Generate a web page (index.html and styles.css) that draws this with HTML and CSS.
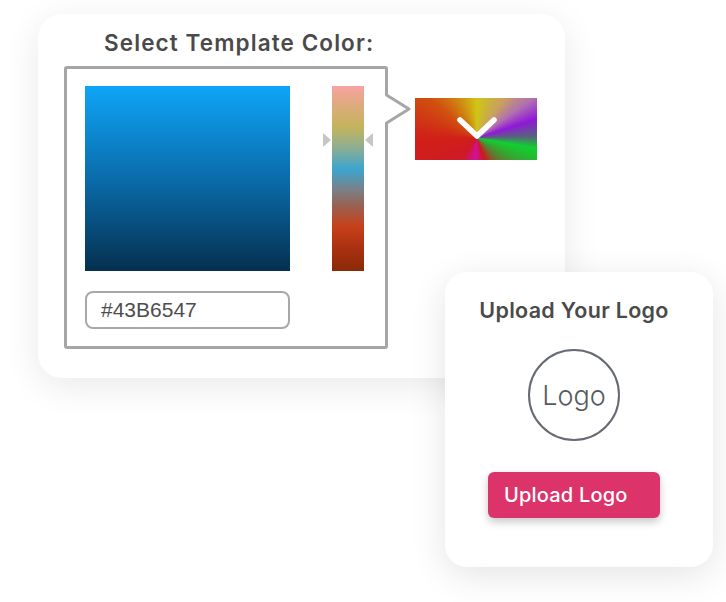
FILE: index.html
```html
<!DOCTYPE html>
<html lang="en">
<head>
	<meta charset="UTF-8">
	<title>Template setup</title>
	<link rel="stylesheet" href="styles.css">
</head>
<body>
	<div class="stage">
		<section class="color-card">
			<h2 class="color-title">Select Template Color:</h2>
			<div class="picker-row">
				<div class="picker">
					<div class="picker-main">
						<div class="sv-box"></div>
						<span class="hue-mark hue-mark-left"></span>
						<div class="hue"></div>
						<span class="hue-mark hue-mark-right"></span>
					</div>
					<div class="hex-input">#43B6547</div>
					<svg class="picker-tail" width="30" height="36" viewBox="0 0 30 36">
						<rect x="0" y="3" width="4" height="30" fill="#fff"/>
						<polyline points="1.5,0 1.5,4 24,18 1.5,32 1.5,36" fill="none" stroke="#a6a6a6" stroke-width="3" stroke-linejoin="round"/>
					</svg>
				</div>
				<div class="swatch">
					<svg width="122" height="62" viewBox="0 0 122 62">
						<polyline points="45,22 62,38 79,22" fill="none" stroke="#fff" stroke-width="5.5" stroke-linecap="round" stroke-linejoin="round"/>
					</svg>
				</div>
			</div>
		</section>

		<section class="logo-card">
			<h2 class="logo-title">Upload Your Logo</h2>
			<div class="logo-circle">Logo</div>
			<button class="upload-btn">Upload Logo</button>
		</section>
	</div>
</body>
</html>
```

FILE: styles.css
```css
*{
	margin: 0;
	padding: 0;
	box-sizing: border-box;
}
body{
	background: #fff;
	font-family: "Inter", "Open Sans", sans-serif;
}
.stage{
	position: relative;
	width: 726px;
	height: 602px;
	overflow: hidden;
	padding: 14px 0 0 38px;
}

/* colour picker card */
.color-card{
	width: 527px;
	height: 364px;
	background: #fff;
	border-radius: 24px;
	box-shadow: 0 8px 36px rgba(0,0,0,0.09);
	padding: 13px 0 0 26px;
}
.color-title{
	margin-left: 40px;
	height: 39px;
	font-size: 22.5px;
	line-height: 32px;
	font-weight: 600;
	letter-spacing: 1.1px;
	color: #4a4a4a;
}
.picker-row{
	display: flex;
	align-items: flex-start;
}
.picker{
	position: relative;
	width: 324px;
	height: 283px;
	border: 3px solid #a6a6a6;
	border-radius: 3px;
	padding: 17px 0 0 18px;
}
.picker-main{
	display: flex;
	align-items: flex-start;
}
.sv-box{
	width: 205px;
	height: 185px;
	background: linear-gradient(#0ea5f7, #0a6cab 50%, #05304f);
}
.hue{
	width: 32px;
	height: 185px;
	margin: 0 1px;
	background: linear-gradient(#f8a2a2 0%, #e0aa80 9%, #c4b45c 22%, #8fae90 33%, #3ca5cf 45%, #7a8088 56%, #9a6050 65%, #c8401a 76%, #a83010 88%, #8a2a08 100%);
}
.hue-mark{
	width: 0;
	height: 0;
	margin-top: 47px;
	border-top: 7px solid transparent;
	border-bottom: 7px solid transparent;
}
.hue-mark-left{
	margin-left: 33px;
	border-left: 8px solid #c6c6c6;
}
.hue-mark-right{
	border-right: 8px solid #c6c6c6;
}
.hex-input{
	width: 205px;
	height: 38px;
	margin-top: 20px;
	border: 2px solid #a8a8a8;
	border-radius: 8px;
	padding-left: 14px;
	font-family: "Liberation Sans", sans-serif;
	font-size: 21px;
	line-height: 34px;
	color: #4d4d4d;
}
.picker-tail{
	position: absolute;
	right: -30px;
	top: 22px;
}
.swatch{
	width: 122px;
	height: 62px;
	margin: 32px 0 0 27px;
	background: conic-gradient(from 0deg at 62px 40px, #cfc614 0deg, #c9a060 35deg, #b070b0 55deg, #9018d8 72deg, #5a6080 88deg, #10d030 100deg, #3aa030 120deg, #6a7030 138deg, #d01818 160deg, #d010a0 185deg, #d01828 215deg, #d02018 270deg, #d05010 310deg, #d08a10 335deg, #cfc614 360deg);
}
.swatch svg{
	display: block;
}

/* logo card, sits over the picker card */
.logo-card{
	position: absolute;
	left: 445px;
	top: 272px;
	width: 268px;
	height: 295px;
	background: #fff;
	border-radius: 22px;
	box-shadow: 0 8px 36px rgba(0,0,0,0.11);
	padding: 24px 10px 0 0;
	display: flex;
	flex-direction: column;
	align-items: center;
}
.logo-title{
	font-size: 21.5px;
	line-height: 28px;
	font-weight: 600;
	letter-spacing: 0.3px;
	color: #4a4a4a;
}
.logo-circle{
	width: 92px;
	height: 92px;
	margin-top: 25px;
	border: 2px solid #666a72;
	border-radius: 50%;
	display: flex;
	align-items: center;
	justify-content: center;
	font-size: 27px;
	font-weight: 300;
	color: #555a62;
}
.upload-btn{
	width: 172px;
	height: 46px;
	margin-top: 31px;
	border: none;
	border-radius: 6px;
	background: #dc346a;
	box-shadow: 0 4px 8px rgba(0,0,0,0.22);
	padding-left: 16px;
	text-align: left;
	font-family: "Inter", "Open Sans", sans-serif;
	font-size: 20px;
	font-weight: 500;
	letter-spacing: 0.2px;
	color: #fff;
}
```
